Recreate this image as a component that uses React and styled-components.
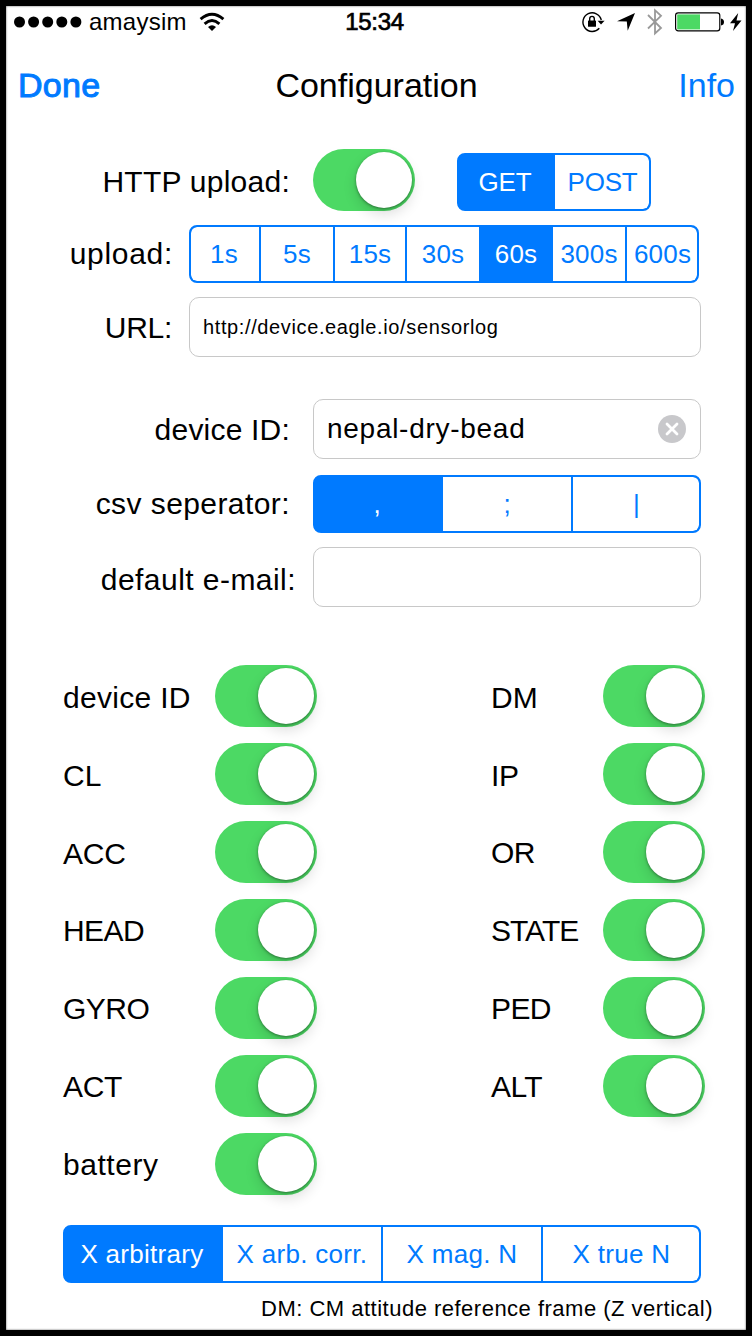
import React from "react";
import styled, { createGlobalStyle } from "styled-components";

const BLUE = "#007aff";
const GREEN = "#4cd964";

const GlobalStyle = createGlobalStyle`
  html, body { margin: 0; padding: 0; background: #000; }
  *, *::before, *::after { box-sizing: border-box; }
`;

const Screen = styled.main`
  display: flex;
  flex-direction: column;
  width: 752px;
  height: 1336px;
  border: 6px solid #000;
  background: #fff;
  color: #000;
  font-family: "Liberation Sans", Arial, Helvetica, sans-serif;
  box-shadow: inset 0 0 2px rgba(0, 0, 0, 0.75);
  overflow: hidden;
`;

const StatusBar = styled.header`
  display: grid;
  grid-template-columns: 1fr auto 1fr;
  align-items: center;
  height: 31px;
  padding: 0 4px 0 8px;
  font-size: 24px;
  line-height: 31px;
`;

const StatusGroup = styled.div`
  display: flex;
  align-items: center;
  justify-content: ${(p) => (p.$end ? "flex-end" : "flex-start")};
  height: 31px;
`;

const Carrier = styled.span`
  margin: 0 12px 0 7px;
  letter-spacing: 0.25px;
`;

const Clock = styled.time`
  margin-right: 7px;
  letter-spacing: -0.3px;
  -webkit-text-stroke: 0.7px #000;
`;

const Icon = styled.svg`
  display: block;
  flex: none;
  margin-left: ${(p) => p.$gap || 0}px;
`;

const NavBar = styled.nav`
  display: grid;
  grid-template-columns: 1fr auto 1fr;
  align-items: center;
  height: 97px;
  padding: 0 11px 0 12px;
  font-size: 34px;
  line-height: 97px;
`;

const NavButton = styled.a`
  color: ${BLUE};
  justify-self: ${(p) => (p.$end ? "end" : "start")};
  letter-spacing: ${(p) => (p.$strong ? 0.3 : 0)}px;
  -webkit-text-stroke: ${(p) => (p.$strong ? 1 : 0)}px ${BLUE};
`;

const Title = styled.h1`
  margin: 0;
  font-size: 34px;
  font-weight: 400;
  letter-spacing: 0;
`;

const Form = styled.section`
  display: flex;
  flex-direction: column;
  padding-top: 15px;
`;

const FormRow = styled.div`
  display: flex;
  align-items: center;
  height: ${(p) => p.$h}px;
  margin-bottom: ${(p) => p.$after}px;
`;

const Label = styled.label`
  flex: none;
  width: ${(p) => p.$w}px;
  padding-right: ${(p) => p.$pad}px;
  padding-top: ${(p) => p.$drop || 0}px;
  text-align: right;
  white-space: nowrap;
  font-size: 30px;
  line-height: 34px;
  letter-spacing: ${(p) => p.$ls ?? 0.4}px;
`;

const Field = styled.div`
  display: flex;
  align-items: center;
  justify-content: space-between;
  width: ${(p) => p.$w}px;
  height: 60px;
  padding: 0 14px 0 13px;
  border: 1px solid #c8c8c8;
  border-radius: 10px;
  font-size: ${(p) => p.$size || 28}px;
  letter-spacing: ${(p) => p.$ls || 0}px;
`;

const SegmentBar = styled.div`
  display: grid;
  grid-template-columns: ${(p) => p.$cols};
  width: ${(p) => p.$w}px;
  height: 58px;
  margin: ${(p) => p.$m || 0};
  border: 2px solid ${BLUE};
  border-radius: 8px;
  background: ${BLUE};
  overflow: hidden;
`;

const Segment = styled.div`
  display: flex;
  align-items: center;
  justify-content: center;
  border-right: 2px solid ${BLUE};
  background: ${(p) => (p.$on ? BLUE : "#fff")};
  color: ${(p) => (p.$on ? "#fff" : BLUE)};
  font-size: 26px;
  letter-spacing: ${(p) => p.$ls}px;
  white-space: nowrap;
  &:first-child { padding-right: 2px; border-radius: 6px 0 0 6px; }
  &:last-child { border-right: 0; padding-left: 1px; border-radius: 0 6px 6px 0; }
`;

const Track = styled.span`
  display: flex;
  flex: none;
  justify-content: flex-end;
  width: 102px;
  height: 62px;
  padding: 3px;
  margin-right: ${(p) => p.$after || 0}px;
  border-radius: 31px;
  background: ${GREEN};
`;

const Knob = styled.span`
  width: 56px;
  height: 56px;
  border-radius: 50%;
  background: #fff;
  box-shadow: 0 1px 3px rgba(0, 0, 0, 0.4), 0 6px 14px rgba(0, 0, 0, 0.14);
`;

const Switches = styled.section`
  display: grid;
  grid-template-columns: 428px 214px;
  grid-auto-rows: 78px;
  padding-left: 57px;
  height: 560px;
`;

const SwitchRow = styled.div`
  display: flex;
  align-items: flex-start;
`;

const SwitchLabel = styled.span`
  width: ${(p) => p.$w}px;
  padding-top: ${(p) => p.$drop}px;
  font-size: 30px;
  line-height: 62px;
  letter-spacing: ${(p) => p.$ls}px;
`;

const Footnote = styled.p`
  margin: 13px 33px 0 0;
  text-align: right;
  font-size: 22px;
  line-height: 26px;
  letter-spacing: 0.49px;
  white-space: nowrap;
`;

function Segments({ items, active, cols, w, m, ls = 0.5 }) {
  return (
    <SegmentBar $cols={cols} $w={w} $m={m}>
      {items.map((t, i) => (
        <Segment key={t} $on={i === active} $ls={ls}>{t}</Segment>
      ))}
    </SegmentBar>
  );
}

function Toggle({ after }) {
  return <Track $after={after}><Knob /></Track>;
}

const switches = [
  ["device ID", 0.3], ["DM", 0], ["CL", 0], ["IP", -0.3], ["ACC", -0.2], ["OR", -0.5],
  ["HEAD", -0.6], ["STATE", -1], ["GYRO", -0.5], ["PED", -0.6], ["ACT", -0.3], ["ALT", -0.6],
  ["battery", 0.55],
];

export default function App() {
  return (
    <Screen>
      <GlobalStyle />
      <StatusBar>
        <StatusGroup>
          <Icon width="68" height="12" viewBox="0 0 68 12">
            {[5.5, 19.6, 33.7, 47.8, 61.9].map((x) => <circle key={x} cx={x} cy="6" r="5.5" />)}
          </Icon>
          <Carrier>amaysim</Carrier>
          <Icon width="26" height="20" viewBox="0 0 26 20" fill="none" stroke="#000">
            <path d="M1.6 7.2Q13 -2.8 24.4 7.2" strokeWidth="2.9" />
            <path d="M5.6 11.8Q13 5.2 20.4 11.8" strokeWidth="2.9" />
            <path d="M9 14.9Q13 11.5 17 14.9L13 19Z" fill="#000" stroke="none" />
          </Icon>
        </StatusGroup>
        <Clock>15:34</Clock>
        <StatusGroup $end>
          <Icon width="24" height="22" viewBox="0 0 24 22" fill="none" stroke="#000">
            <path d="M18.3 17.2A9.3 9.3 0 1 1 20.3 9" strokeWidth="1.4" />
            <path d="M16.6 9.8H23.6L20 13.6Z" fill="#000" stroke="none" />
            <rect x="7" y="9.4" width="8" height="6.4" rx=".6" fill="#000" stroke="none" />
            <path d="M8.7 10V7.7a2.3 2.3 0 0 1 4.6 0V10" strokeWidth="1.4" />
          </Icon>
          <Icon $gap={12} width="18" height="18" viewBox="0 0 18 18">
            <path d="M18 0L0 8.2L9.8 8.4L10.7 17.8Z" />
          </Icon>
          <Icon $gap={12} width="16" height="28" viewBox="0 0 16 28" fill="none" stroke="#999" strokeWidth="1.8">
            <path d="M1 7L14 20L8 25.5V2.2L14 7.8L1 20.5" />
          </Icon>
          <Icon $gap={12} width="50" height="20" viewBox="0 0 50 20">
            <rect x=".6" y=".9" width="44.2" height="18" rx="2.6" fill="none" stroke="#000" strokeWidth="1.2" />
            <rect x="2.2" y="2.4" width="22.8" height="15" fill={GREEN} />
            <path d="M46 6.5Q49 7 49 10T46 13.5Z" />
          </Icon>
          <Icon $gap={5} width="12" height="18" viewBox="0 0 12 18">
            <path d="M8.2 0L0 10.2H5L3 18L11.5 7.4H6.5Z" />
          </Icon>
        </StatusGroup>
      </StatusBar>
      <NavBar>
        <NavButton $strong>Done</NavButton>
        <Title>Configuration</Title>
        <NavButton $end>Info</NavButton>
      </NavBar>
      <Form>
        <FormRow $h={62} $after={14}>
          <Label $w={307} $pad={23} $drop={3} $ls={0.25}>HTTP upload:</Label>
          <Toggle after={42} />
          <Segments w={194} m="4px 0 0" cols="96px 1fr" items={["GET", "POST"]} active={0} ls={-0.2} />
        </FormRow>
        <FormRow $h={58} $after={14}>
          <Label $w={183} $pad={16} $ls={0.7}>upload:</Label>
          <Segments w={510} cols="70px 74px 72px 74px 72px 74px 1fr" active={4} ls={0.2}
            items={["1s", "5s", "15s", "30s", "60s", "300s", "600s"]} />
        </FormRow>
        <FormRow $h={60} $after={42}>
          <Label $w={183} $pad={17} $drop={1} $ls={-0.3}>URL:</Label>
          <Field $w={512} $size={20} $ls={0.62}>http://device.eagle.io/sensorlog</Field>
        </FormRow>
        <FormRow $h={60} $after={16}>
          <Label $w={307} $pad={23} $drop={2} $ls={0.2}>device ID:</Label>
          <Field $w={388} $ls={0.72}>
            nepal-dry-bead
            <Icon width="28" height="28" viewBox="0 0 28 28">
              <circle cx="14" cy="14" r="14" fill="#c8c8cb" />
              <path d="M9 9L19 19M19 9L9 19" stroke="#fff" strokeWidth="2.8" strokeLinecap="round" />
            </Icon>
          </Field>
        </FormRow>
        <FormRow $h={58} $after={14}>
          <Label $w={307} $pad={23} $ls={0.42}>csv seperator:</Label>
          <Segments w={388} cols="128px 130px 1fr" items={[",", ";", "|"]} active={0} ls={0} />
        </FormRow>
        <FormRow $h={60} $after={58}>
          <Label $w={307} $pad={17} $drop={5} $ls={0.45}>default e-mail:</Label>
          <Field $w={388} />
        </FormRow>
      </Form>
      <Switches>
        {switches.map(([name, ls], i) => (
          <SwitchRow key={name}>
            <SwitchLabel $w={i % 2 ? 112 : 152} $drop={i < 5 ? 2 : 1} $ls={ls}>{name}</SwitchLabel>
            <Toggle />
          </SwitchRow>
        ))}
      </Switches>
      <Segments w={638} m="0 0 0 57px" cols="158px 160px 160px 1fr" active={0} ls={0.3}
        items={["X arbitrary", "X arb. corr.", "X mag. N", "X true N"]} />
      <Footnote>DM: CM attitude reference frame (Z vertical)</Footnote>
    </Screen>
  );
}
